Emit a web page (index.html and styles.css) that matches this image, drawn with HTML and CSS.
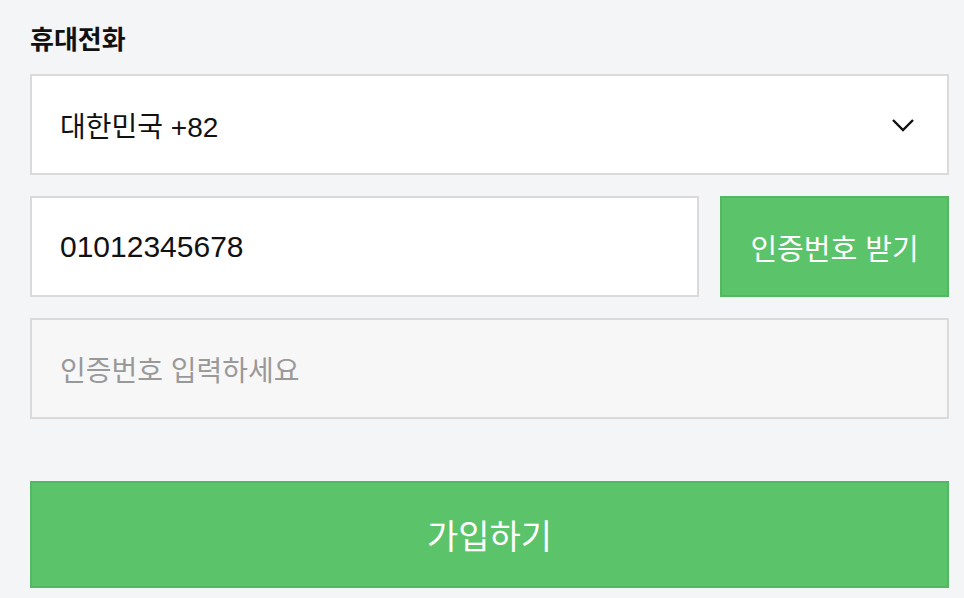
FILE: index.html
```html
<!DOCTYPE html>
<html lang="ko">
<head>
    <meta charset="UTF-8">
    <meta name="viewport" content="width=device-width, initial-scale=1.0">
    <title>회원가입</title>
    <link rel="stylesheet" href="styles.css">
</head>
<body>

<div class="container">
    <h3 class="label">휴대전화</h3>
    <div class="field select-box">
        <span>대한민국 +82</span>
        <svg class="chevron" width="24" height="16" viewBox="0 0 24 16">
            <path d="M2 3 L12 13 L22 3" fill="none" stroke="#111" stroke-width="2.4"/>
        </svg>
    </div>
    <div class="row">
        <div class="field phone">01012345678</div>
        <button class="btn btn-small">인증번호 받기</button>
    </div>
    <div class="field code">인증번호 입력하세요</div>
    <button class="btn btn-submit">가입하기</button>
</div>

</body>
</html>
```

FILE: styles.css
```css
body {
    font-family: "Liberation Sans", "Noto Sans CJK KR", sans-serif;
    margin: 0;
    padding: 0;
    background-color: #f4f5f7;
}
.container {
    width: 919px;
    padding: 25px 0 0 30px;
    display: flex;
    flex-direction: column;
}
.label {
    margin: 0 0 19px;
    font-size: 26px;
    font-weight: bold;
    color: #111;
    line-height: 30px;
}
.field {
    box-sizing: border-box;
    height: 101px;
    border: 2px solid #dadada;
    background-color: #fff;
    display: flex;
    align-items: center;
    padding: 0 28px;
    font-size: 28px;
    color: #111;
}
.select-box {
    justify-content: space-between;
    padding-right: 32px;
}
.row {
    display: flex;
    gap: 21px;
    margin-top: 21px;
}
.phone {
    flex: 1;
    font-size: 30px;
}
.code {
    margin-top: 21px;
    background-color: #f7f7f7;
    color: #999;
}
.btn {
    box-sizing: border-box;
    border: 2px solid #53b862;
    background-color: #5bc36a;
    color: #fff;
    font-family: inherit;
    cursor: pointer;
}
.btn-small {
    width: 229px;
    height: 101px;
    font-size: 29px;
}
.btn-submit {
    margin-top: 62px;
    height: 107px;
    font-size: 34px;
}
```
